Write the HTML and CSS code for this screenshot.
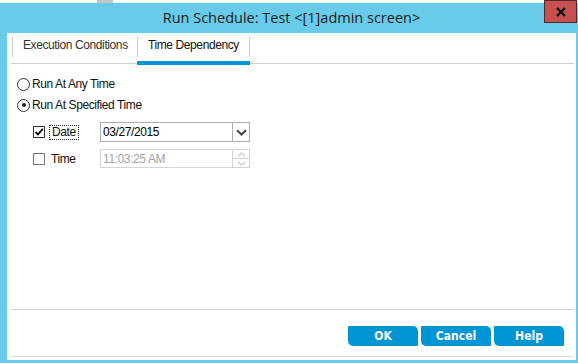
FILE: index.html
```html
<!DOCTYPE html>
<html lang="en">
<head>
  <meta charset="UTF-8" />
  <meta name="viewport" content="width=device-width, initial-scale=1.0" />
  <title>Run Schedule</title>
  <link rel="stylesheet" href="styles.css">
</head>
<body>
  <div class="desk">
    <span class="desk-icon"></span>
  </div>

  <div class="window">
    <div class="titlebar">Run Schedule: Test &lt;[1]admin screen&gt;</div>
    <button class="close" title="Close">
      <svg width="12" height="10" viewBox="0 0 12 10">
        <path d="M2 1 L10 9 M10 1 L2 9" stroke="#111" stroke-width="2.4" fill="none" />
      </svg>
    </button>

    <div class="panel">
      <div class="tabs">
        <div class="tab tab-first">Execution Conditions</div>
        <div class="tab tab-second active">Time Dependency</div>
      </div>

      <div class="content">
        <div class="radio-row">
          <span class="radio"></span>
          <span>Run At Any Time</span>
        </div>
        <div class="radio-row second">
          <span class="radio checked"></span>
          <span>Run At Specified Time</span>
        </div>

        <div class="field-row date-row">
          <span class="check checked">
            <svg width="10" height="10" viewBox="0 0 10 10">
              <path d="M1.5 5 L4 7.5 L8.8 1.8" stroke="#000" stroke-width="1.8" fill="none" />
            </svg>
          </span>
          <span class="field-label"><span class="focus">Date</span></span>
          <div class="combo">
            <span class="combo-text">03/27/2015</span>
            <span class="combo-btn">
              <svg width="11" height="7" viewBox="0 0 11 7">
                <path d="M1 1.2 L5.5 5.5 L10 1.2" stroke="#444" stroke-width="2" fill="none" />
              </svg>
            </span>
          </div>
        </div>

        <div class="field-row time-row">
          <span class="check"></span>
          <span class="field-label"><span class="plain">Time</span></span>
          <div class="spin">
            <span class="spin-text">11:03:25 AM</span>
            <span class="spin-btns">
              <span class="spin-half">
                <svg width="9" height="5" viewBox="0 0 9 5"><path d="M1 4 L4.5 1 L8 4" stroke="#c8c8c8" stroke-width="1.2" fill="none" /></svg>
              </span>
              <span class="spin-half">
                <svg width="9" height="5" viewBox="0 0 9 5"><path d="M1 1 L4.5 4 L8 1" stroke="#c8c8c8" stroke-width="1.2" fill="none" /></svg>
              </span>
            </span>
          </div>
        </div>
      </div>

      <div class="footer">
        <button class="btn">OK</button>
        <button class="btn">Cancel</button>
        <button class="btn">Help</button>
      </div>
    </div>
  </div>
</body>
</html>
```

FILE: styles.css
```css
* {
  box-sizing: border-box;
}

body {
  margin: 0;
  width: 578px;
  height: 363px;
  overflow: hidden;
  position: relative;
  background-color: #ffffff;
  font-family: 'Liberation Sans', Arial, sans-serif;
  font-size: 12px;
  letter-spacing: -0.4px;
  color: #000;
}

/* bits of the desktop behind the dialog */
.desk {
  height: 3px;
  position: relative;
}

.desk-icon {
  position: absolute;
  left: 97px;
  top: 0;
  width: 16px;
  height: 3px;
  background: #c4c4c4;
}

.window {
  height: 360px;
  background-color: #69cbea;
  padding: 0 2px 3px 7px;
  display: flex;
  flex-direction: column;
}

.titlebar {
  height: 30px;
  display: flex;
  align-items: center;
  justify-content: center;
  padding-bottom: 1px;
  font-family: 'Open Sans', sans-serif;
  font-size: 14.5px;
  letter-spacing: 0;
  color: #1b1b1b;
}

.close {
  position: absolute;
  top: 0;
  right: 1px;
  width: 33px;
  height: 23px;
  padding: 0;
  background: #c75050;
  border: 1px solid #4f2a2a;
  display: flex;
  align-items: center;
  justify-content: center;
}

.panel {
  flex: 1;
  background: #ffffff;
  display: flex;
  flex-direction: column;
}

/* tabs */
.tabs {
  height: 27px;
  margin: 4px 2px 0 4px;
  padding-left: 1px;
  border-bottom: 1px solid #d0d0d0;
  display: flex;
  align-items: flex-start;
}

.tab {
  height: 20px;
  line-height: 16px;
  padding-left: 10px;
  border-left: 1px solid #cfcfcf;
  color: #333;
  position: relative;
}

.tab-first {
  width: 125px;
}

.tab-second {
  width: 113px;
  border-right: 1px solid #cfcfcf;
  color: #111;
}

.tab.active::after {
  content: '';
  position: absolute;
  left: -1px;
  right: -1px;
  top: 24px;
  height: 4px;
  background: #0096d6;
}

/* body */
.content {
  flex: 1;
  padding: 13px 0 0 10px;
}

.radio-row {
  height: 14px;
  display: flex;
  align-items: center;
  gap: 2px;
  color: #111;
}

.radio-row.second {
  margin-top: 7px;
}

.radio {
  width: 13px;
  height: 13px;
  border: 1px solid #333;
  border-radius: 50%;
  display: flex;
  align-items: center;
  justify-content: center;
}

.radio.checked::after {
  content: '';
  width: 4px;
  height: 4px;
  border-radius: 50%;
  background: #222;
}

.field-row {
  display: flex;
  align-items: center;
  margin-left: 16px;
}

.date-row {
  margin-top: 10px;
}

.time-row {
  margin-top: 7px;
}

.check {
  width: 12px;
  height: 12px;
  border: 1px solid #777;
  display: flex;
  align-items: center;
  justify-content: center;
  flex-shrink: 0;
}

.check.checked {
  border-color: #333;
}

.field-label {
  width: 55px;
  padding-left: 4px;
  display: flex;
}

.focus {
  height: 15px;
  line-height: 13px;
  padding: 0 2px;
  border: 1px dotted #333;
  color: #111;
}

.plain {
  padding-left: 2px;
  color: #111;
}

.combo {
  width: 150px;
  height: 20px;
  border: 1px solid #adadad;
  display: flex;
  align-items: center;
}

.combo-text {
  flex: 1;
  padding-left: 2px;
}

.combo-btn {
  width: 17px;
  height: 100%;
  border-left: 1px solid #adadad;
  display: flex;
  align-items: center;
  justify-content: center;
}

.spin {
  width: 150px;
  height: 19px;
  border: 1px solid #d4d4d4;
  display: flex;
  align-items: center;
}

.spin-text {
  flex: 1;
  padding-left: 2px;
  color: #a3a3a3;
}

.spin-btns {
  width: 17px;
  height: 100%;
  border-left: 1px solid #d4d4d4;
  display: flex;
  flex-direction: column;
}

.spin-half {
  flex: 1;
  display: flex;
  align-items: center;
  justify-content: center;
}

.spin-half + .spin-half {
  border-top: 1px solid #d4d4d4;
}

/* footer */
.footer {
  height: 48px;
  margin: 0 2px 3px 4px;
  padding: 16px 10px 0 0;
  border-top: 1px solid #cfcfcf;
  border-bottom: 1px solid #dedede;
  display: flex;
  justify-content: flex-end;
  align-items: flex-start;
  gap: 3px;
}

.btn {
  width: 70px;
  height: 20px;
  padding: 0;
  border: none;
  border-radius: 1px 5px 1px 5px;
  background-color: #0096d6;
  color: #ffffff;
  font-family: 'DejaVu Sans Condensed', 'DejaVu Sans', sans-serif;
  font-stretch: condensed;
  font-weight: bold;
  font-size: 12px;
  letter-spacing: 0;
  cursor: pointer;
}
```
